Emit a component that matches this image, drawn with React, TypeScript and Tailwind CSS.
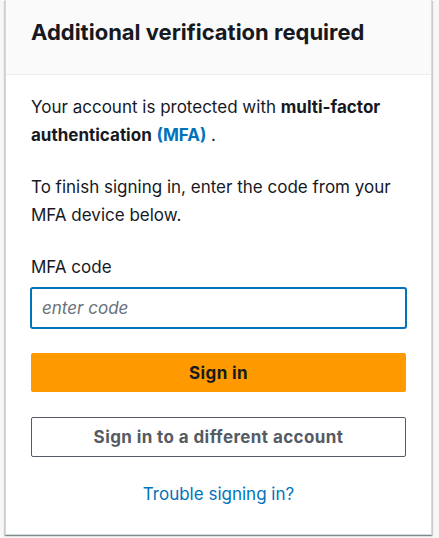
export default function App() {
  return (
    <div
      className="w-[439px] h-[538px] bg-[#f8f7f5] overflow-hidden"
      style={{ fontFamily: 'Inter, "Noto Sans", sans-serif' }}
    >
      <div className="ml-[5px] w-[427px] h-[535px] bg-white border-x border-b border-[#d5dbdb] shadow-[0_1px_1px_0_rgba(0,28,36,0.3),1px_1px_1px_0_rgba(0,28,36,0.15),-1px_1px_1px_0_rgba(0,28,36,0.15)] flex flex-col">
        {/* header */}
        <div className="h-[75px] bg-[#fafafa] border-b border-[#eaeded] px-[25px] pt-[18px]">
          <h1 className="text-[22px] leading-[28px] font-bold text-[#16191f]">
            Additional verification required
          </h1>
        </div>

        {/* body */}
        <div className="px-[25px] pt-[18px] text-[17px] leading-[28px] text-[#16191f]">
          <p>
            Your account is protected with <b>multi-factor authentication</b>{' '}
            <a className="font-bold text-[#0073bb]">(MFA)</a> .
          </p>
          <p className="mt-[24px]">
            To finish signing in, enter the code from your MFA device below.
          </p>

          <label className="block mt-[26px] leading-[24px]">MFA code</label>
          <input
            className="block mt-[8px] -ml-px w-[377px] h-[42px] border-2 border-[#0073bb] rounded-[3px] px-[10px] text-[17px] outline-none placeholder:italic placeholder:text-[#687078]"
            placeholder="enter code"
          />

          <button className="block w-full mt-[24px] h-[39px] bg-[#ff9900] rounded-[2px] font-bold tracking-[0.4px] text-[#16191f] leading-[24px]">
            Sign in
          </button>
          <button className="block w-full mt-[25px] h-[40px] border border-[#545b64] rounded-[2px] font-bold tracking-[0.4px] text-[#545b64] leading-[24px]">
            Sign in to a different account
          </button>

          <div className="mt-[25px] text-center leading-[24px]">
            <a className="text-[#0073bb]">Trouble signing in?</a>
          </div>
        </div>
      </div>
    </div>
  );
}
